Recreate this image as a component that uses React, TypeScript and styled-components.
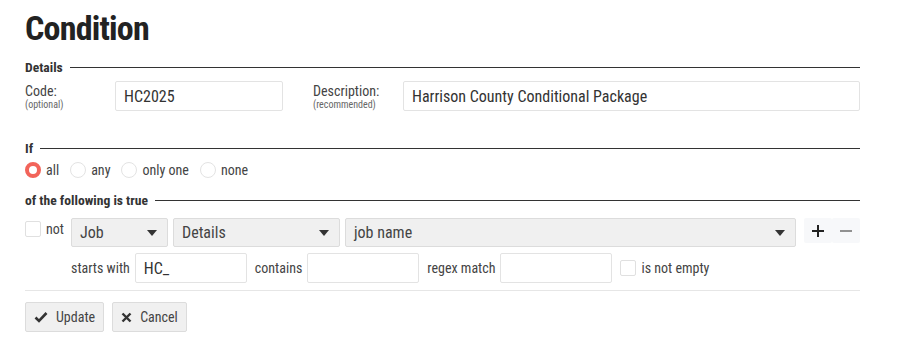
import React from "react";
import styled, { createGlobalStyle } from "styled-components";

const Global = createGlobalStyle`
  html, body { margin: 0; padding: 0; background: #fff; }
  body {
    font-family: "Roboto", "Liberation Sans", sans-serif;
    font-stretch: condensed;
    color: #444;
    font-size: 14px;
  }
  * { box-sizing: border-box; }
`;

const Page = styled.div`
  padding: 8px 43px 0 25px;
  width: 903px;
`;

const Title = styled.h1`
  margin: 0 0 11px;
  font-size: 34px;
  line-height: 40px;
  font-weight: 700;
  letter-spacing: -0.8px;
  color: #222;
`;

const Legend = styled.div<{ $mt?: number }>`
  display: flex;
  align-items: center;
  gap: 7px;
  margin-top: ${(p) => p.$mt ?? 0}px;
  font-weight: 700;
  font-size: 13.6px;
  color: #333;
  line-height: 16px;
  &::after {
    content: "";
    flex: 1;
    height: 1px;
    background: #333;
  }
`;

const DetailsRow = styled.div`
  display: flex;
  align-items: flex-start;
  margin-top: 6px;
`;

const LabelBlock = styled.div<{ $w: number }>`
  width: ${(p) => p.$w}px;
  display: flex;
  flex-direction: column;
  padding-top: 2px;
`;

const LabelMain = styled.span`
  font-size: 14px;
  line-height: 16px;
  color: #444;
`;

const LabelSub = styled.span`
  font-size: 10px;
  line-height: 12px;
  color: #666;
`;

const TextInput = styled.input<{ $w?: number; $grow?: boolean }>`
  width: ${(p) => (p.$w ? `${p.$w}px` : "auto")};
  flex: ${(p) => (p.$grow ? "1" : "none")};
  height: 30px;
  border: 1px solid #e3e3e3;
  border-radius: 2px;
  padding: 0 8px;
  font: inherit;
  font-size: 16px;
  color: #333;
  background: #fff;
  outline: none;
`;

const Spacer = styled.div<{ $w: number }>`
  width: ${(p) => p.$w}px;
  flex: none;
`;

const RadioRow = styled.div`
  display: flex;
  align-items: center;
  margin-top: 6px;
  height: 16px;
`;

const RadioItem = styled.label`
  display: flex;
  align-items: center;
  gap: 5px;
  margin-right: 11px;
  font-size: 14px;
  color: #444;
`;

const RadioCircle = styled.span<{ $on?: boolean }>`
  width: 16px;
  height: 16px;
  border-radius: 50%;
  border: ${(p) => (p.$on ? "4px solid #f2645a" : "1px solid #e3e3e3")};
  background: #fff;
  flex: none;
`;

const CondRow = styled.div`
  display: flex;
  align-items: flex-start;
  margin-top: 10px;
`;

const NotBox = styled.label`
  display: flex;
  align-items: flex-start;
  gap: 5px;
  width: 46px;
  padding-top: 3px;
  font-size: 14px;
  color: #444;
`;

const Check = styled.span`
  width: 16px;
  height: 16px;
  border: 1px solid #e0e0e0;
  border-radius: 2px;
  background: #fff;
  flex: none;
`;

const Select = styled.div<{ $w?: number; $grow?: boolean }>`
  display: flex;
  align-items: center;
  justify-content: space-between;
  height: 29px;
  width: ${(p) => (p.$w ? `${p.$w}px` : "auto")};
  flex: ${(p) => (p.$grow ? "1" : "none")};
  margin-right: 5px;
  padding: 0 10px 0 8px;
  background: #f0f0f0;
  border: 1px solid #dcdcdc;
  border-radius: 2px;
  font-size: 16px;
  color: #444;
`;

const Caret = styled.span`
  width: 0;
  height: 0;
  border-left: 5px solid transparent;
  border-right: 5px solid transparent;
  border-top: 6px solid #333;
`;

const IconBtns = styled.div`
  display: flex;
  margin-left: 3px;
`;

const IconBtn = styled.button<{ $muted?: boolean }>`
  width: 28px;
  height: 25px;
  border: none;
  background: #f7f8fa;
  border-radius: 2px;
  padding: 0;
  display: flex;
  align-items: center;
  justify-content: center;
  color: ${(p) => (p.$muted ? "#777" : "#222")};
`;

const SubRow = styled.div`
  display: flex;
  align-items: center;
  margin: 6px 0 0 46px;
  font-size: 14px;
  color: #444;
`;

const SubLabel = styled.span`
  margin-right: 5px;
`;

const SubInput = styled(TextInput)`
  margin-right: 8px;
`;

const Divider = styled.div`
  height: 1px;
  background: #e6e6e6;
  margin-top: 7px;
`;

const Actions = styled.div`
  display: flex;
  gap: 8px;
  margin-top: 11px;
`;

const Button = styled.button`
  display: flex;
  align-items: center;
  gap: 8px;
  height: 30px;
  padding: 0 8px;
  background: #f0f0f0;
  border: 1px solid #dcdcdc;
  border-radius: 2px;
  font: inherit;
  font-size: 14px;
  color: #444;
`;

const CheckIcon = () => (
  <svg width="14" height="12" viewBox="0 0 14 12">
    <path d="M1.5 6.5 L5 10 L12.5 2" stroke="#333" strokeWidth="2.6" fill="none" />
  </svg>
);

const XIcon = () => (
  <svg width="11" height="11" viewBox="0 0 11 11">
    <path d="M1.5 1.5 L9.5 9.5 M9.5 1.5 L1.5 9.5" stroke="#333" strokeWidth="2.4" fill="none" />
  </svg>
);

const PlusIcon = () => (
  <svg width="12" height="12" viewBox="0 0 12 12">
    <path d="M6 0 V12 M0 6 H12" stroke="currentColor" strokeWidth="2" />
  </svg>
);

const MinusIcon = () => (
  <svg width="12" height="12" viewBox="0 0 12 12">
    <path d="M0 6 H12" stroke="currentColor" strokeWidth="1.6" />
  </svg>
);

export default function App() {
  return (
    <>
      <Global />
      <Page>
        <Title>Condition</Title>
        <Legend>Details</Legend>
        <DetailsRow>
          <LabelBlock $w={90}>
            <LabelMain>Code:</LabelMain>
            <LabelSub>(optional)</LabelSub>
          </LabelBlock>
          <TextInput $w={168} defaultValue="HC2025" />
          <Spacer $w={30} />
          <LabelBlock $w={90}>
            <LabelMain>Description:</LabelMain>
            <LabelSub>(recommended)</LabelSub>
          </LabelBlock>
          <TextInput $grow defaultValue="Harrison County Conditional Package" />
        </DetailsRow>

        <Legend $mt={29}>If</Legend>
        <RadioRow>
          <RadioItem><RadioCircle $on />all</RadioItem>
          <RadioItem><RadioCircle />any</RadioItem>
          <RadioItem><RadioCircle />only one</RadioItem>
          <RadioItem><RadioCircle />none</RadioItem>
        </RadioRow>

        <Legend $mt={14}>of the following is true</Legend>
        <CondRow>
          <NotBox><Check />not</NotBox>
          <Select $w={97}>Job<Caret /></Select>
          <Select $w={167}>Details<Caret /></Select>
          <Select $grow>job name<Caret /></Select>
          <IconBtns>
            <IconBtn><PlusIcon /></IconBtn>
            <IconBtn $muted><MinusIcon /></IconBtn>
          </IconBtns>
        </CondRow>
        <SubRow>
          <SubLabel>starts with</SubLabel>
          <SubInput $w={112} defaultValue="HC_" />
          <SubLabel>contains</SubLabel>
          <SubInput $w={112} />
          <SubLabel>regex match</SubLabel>
          <SubInput $w={112} />
          <Check />
          <SubLabel style={{ marginLeft: 5 }}>is not empty</SubLabel>
        </SubRow>
        <Divider />
        <Actions>
          <Button><CheckIcon />Update</Button>
          <Button><XIcon />Cancel</Button>
        </Actions>
      </Page>
    </>
  );
}
